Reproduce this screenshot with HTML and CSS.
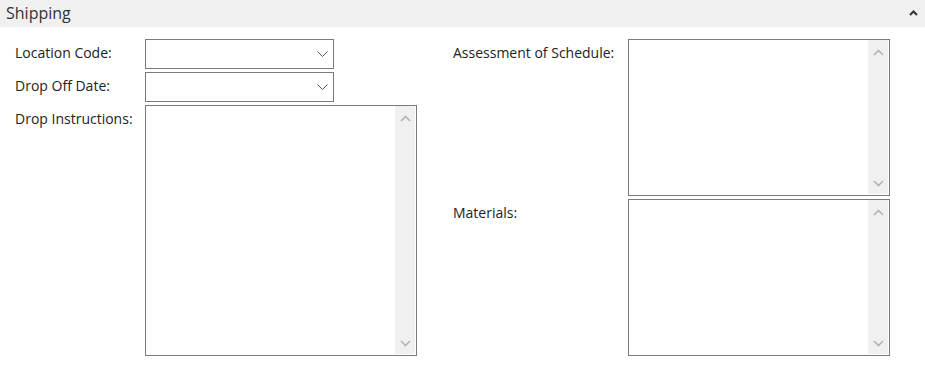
FILE: index.html
```html
<!DOCTYPE html>
<html>
<head>
<meta charset="utf-8">
<link rel="stylesheet" href="styles.css">
</head>
<body>
<div class="panel">
  <div class="header">
    <span class="title">Shipping</span>
    <svg class="collapse" width="9" height="6" viewBox="0 0 9 6"><path d="M1 5 L4.5 1.5 L8 5" fill="none" stroke="#333" stroke-width="2"/></svg>
  </div>
  <div class="body">
    <div class="col left">
      <div class="row">
        <label class="lbl">Location Code:</label>
        <div class="select">
          <svg width="11" height="6" viewBox="0 0 11 6"><path d="M0.5 0.5 L5.5 5.5 L10.5 0.5" fill="none" stroke="#555" stroke-width="1"/></svg>
        </div>
      </div>
      <div class="row">
        <label class="lbl">Drop Off Date:</label>
        <div class="select">
          <svg width="11" height="6" viewBox="0 0 11 6"><path d="M0.5 0.5 L5.5 5.5 L10.5 0.5" fill="none" stroke="#555" stroke-width="1"/></svg>
        </div>
      </div>
      <div class="row grow">
        <label class="lbl">Drop Instructions:</label>
        <div class="area wide">
          <div class="content"></div>
          <div class="scroll">
            <svg width="11" height="7" viewBox="0 0 11 7"><path d="M1 6 L5.5 1.5 L10 6" fill="none" stroke="#b4b4b4" stroke-width="1.6"/></svg>
            <svg width="11" height="7" viewBox="0 0 11 7"><path d="M1 1 L5.5 5.5 L10 1" fill="none" stroke="#b4b4b4" stroke-width="1.6"/></svg>
          </div>
        </div>
      </div>
    </div>
    <div class="col right">
      <div class="row half">
        <label class="lbl">Assessment of Schedule:</label>
        <div class="area narrow">
          <div class="content"></div>
          <div class="scroll">
            <svg width="11" height="7" viewBox="0 0 11 7"><path d="M1 6 L5.5 1.5 L10 6" fill="none" stroke="#b4b4b4" stroke-width="1.6"/></svg>
            <svg width="11" height="7" viewBox="0 0 11 7"><path d="M1 1 L5.5 5.5 L10 1" fill="none" stroke="#b4b4b4" stroke-width="1.6"/></svg>
          </div>
        </div>
      </div>
      <div class="row half">
        <label class="lbl">Materials:</label>
        <div class="area narrow">
          <div class="content"></div>
          <div class="scroll">
            <svg width="11" height="7" viewBox="0 0 11 7"><path d="M1 6 L5.5 1.5 L10 6" fill="none" stroke="#b4b4b4" stroke-width="1.6"/></svg>
            <svg width="11" height="7" viewBox="0 0 11 7"><path d="M1 1 L5.5 5.5 L10 1" fill="none" stroke="#b4b4b4" stroke-width="1.6"/></svg>
          </div>
        </div>
      </div>
    </div>
  </div>
</div>
</body>
</html>
```
FILE: styles.css
```css
html, body {
  margin: 0;
  padding: 0;
  background: #ffffff;
}
body {
  font-family: "Open Sans", "Noto Sans", "Liberation Sans", sans-serif;
  color: #222222;
}
.header {
  height: 27px;
  background: #f0f0f0;
  display: flex;
  align-items: center;
  justify-content: space-between;
  padding: 0 7px 0 6px;
}
.title {
  font-size: 16px;
  color: #333;
  line-height: 27px;
}
.collapse {
  margin-top: -1px;
}
.body {
  display: flex;
  padding: 12px 0 0 15px;
}
.col {
  display: flex;
  flex-direction: column;
  gap: 3px;
  height: 317px;
}
.left {
  width: 402px;
}
.right {
  margin-left: 36px;
}
.row {
  display: flex;
}
.left .lbl {
  width: 130px;
}
.right .lbl {
  width: 175px;
}
.lbl {
  font-size: 14px;
  line-height: 20px;
  padding-top: 4px;
  flex: none;
}
.select {
  width: 189px;
  height: 30px;
  border: 1px solid #7a7a7a;
  display: flex;
  align-items: center;
  justify-content: flex-end;
  padding-right: 5px;
  box-sizing: border-box;
}
.grow {
  flex: 1;
}
.half {
  height: 157px;
}
.area {
  border: 1px solid #7a7a7a;
  display: flex;
  box-sizing: border-box;
}
.wide {
  width: 272px;
  height: 251px;
}
.narrow {
  width: 262px;
  height: 157px;
}
.content {
  flex: 1;
}
.scroll {
  width: 20px;
  margin: 0 1px 1px 0;
  background: #f0f0f0;
  display: flex;
  flex-direction: column;
  justify-content: space-between;
  align-items: center;
  padding: 9px 0 7px;
}
```
